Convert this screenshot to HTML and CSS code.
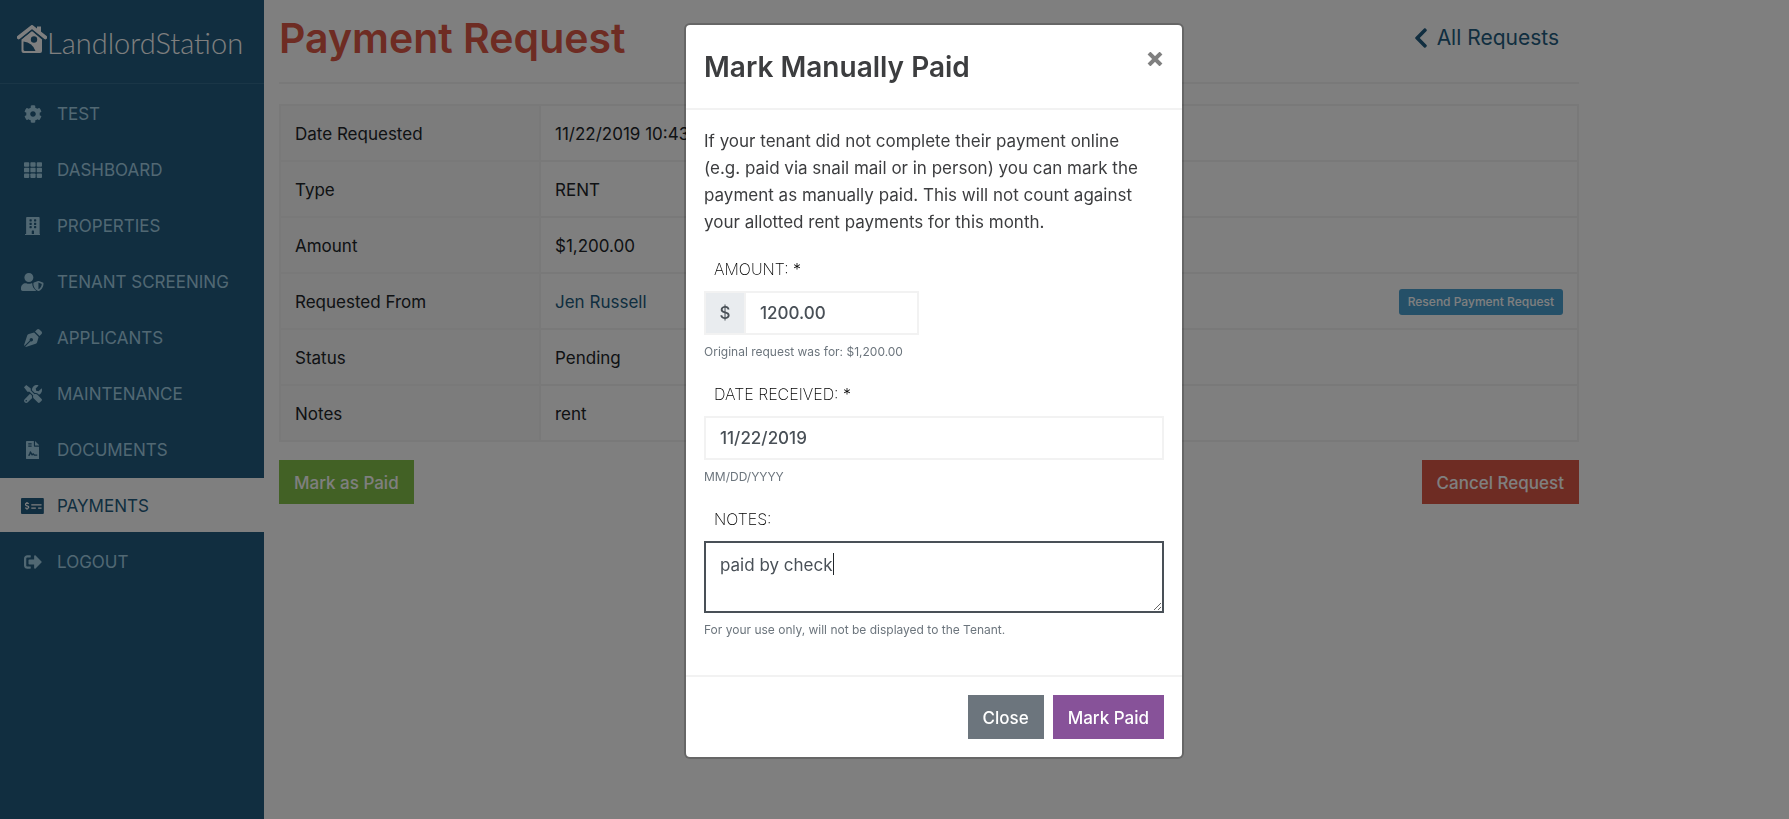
FILE: index.html
```html
<!DOCTYPE html>
<html lang="en">
<head>
<meta charset="utf-8">
<title>Payment Request - LandlordStation</title>
<link rel="stylesheet" href="styles.css">
</head>
<body>
<div class="app">
  <aside class="sidebar">
    <a class="brand" href="#">
      <svg class="brand-mark" viewBox="0 0 30 28" aria-hidden="true">
        <path d="M1.500 12.500 15 1.800 28.500 12.500" fill="none" stroke="currentColor" stroke-width="3.600" stroke-linecap="round" stroke-linejoin="round"/>
        <path d="M20 1.500h4v6l-4-3z" fill="currentColor"/>
        <path d="M4.500 14.500 15 6l10 8.500V26q0 2-2 2H6.500q-2 0-2-2z" fill="currentColor"/>
        <path d="M4 14 15 5.300 26 14" fill="none" stroke="#225c80" stroke-width="1"/>
        <g fill="#225c80"><circle cx="17" cy="14.500" r="3.200"/><path d="M6.500 16.500q9 1 12 9.500h-10.500q-1.500 0-1.500-1.500z"/></g>
      </svg>
      <span class="brand-name">LandlordStation</span>
    </a>
    <nav class="nav">
      <a class="nav-link" href="#"><span class="nav-icon"><svg viewBox="0 0 512 512"><path d="M487.400 315.700l-42.600-24.600c4.300-23.200 4.300-47 0-70.200l42.600-24.600c4.900-2.800 7.100-8.600 5.500-14-11.100-35.600-30-67.800-54.700-94.600-3.800-4.100-10-5.100-14.800-2.300L380.800 110c-17.900-15.400-38.500-27.300-60.800-35.100V25.800c0-5.600-3.900-10.500-9.400-11.700-36.700-8.200-74.300-7.800-109.200 0-5.500 1.200-9.400 6.100-9.400 11.700V75c-22.200 7.900-42.800 19.800-60.800 35.100L88.700 85.500c-4.900-2.800-11-1.900-14.800 2.300-24.700 26.700-43.600 58.900-54.700 94.600-1.700 5.400.6 11.200 5.500 14L67.300 221c-4.300 23.200-4.300 47 0 70.200l-42.600 24.600c-4.900 2.800-7.100 8.600-5.500 14 11.100 35.600 30 67.800 54.700 94.600 3.800 4.100 10 5.100 14.800 2.300l42.600-24.600c17.900 15.400 38.500 27.300 60.800 35.100v49.200c0 5.600 3.900 10.500 9.400 11.700 36.700 8.200 74.300 7.800 109.200 0 5.500-1.200 9.400-6.100 9.400-11.700v-49.200c22.200-7.900 42.800-19.800 60.800-35.100l42.600 24.600c4.900 2.800 11 1.900 14.800-2.300 24.700-26.700 43.600-58.900 54.700-94.600 1.500-5.500-.7-11.300-5.600-14.100zM256 336c-44.100 0-80-35.900-80-80s35.900-80 80-80 80 35.900 80 80-35.900 80-80 80z"/></svg></span>TEST</a>
      <a class="nav-link" href="#"><span class="nav-icon"><svg viewBox="0 0 512 512"><g><rect y="32" width="149" height="128" rx="24"/><rect x="181" y="32" width="149" height="128" rx="24"/><rect x="363" y="32" width="149" height="128" rx="24"/><rect y="192" width="149" height="128" rx="24"/><rect x="181" y="192" width="149" height="128" rx="24"/><rect x="363" y="192" width="149" height="128" rx="24"/><rect y="352" width="149" height="128" rx="24"/><rect x="181" y="352" width="149" height="128" rx="24"/><rect x="363" y="352" width="149" height="128" rx="24"/></g></svg></span>DASHBOARD</a>
      <a class="nav-link" href="#"><span class="nav-icon"><svg viewBox="0 0 448 512"><path fill-rule="evenodd" d="M32 24Q32 0 56 0H392Q416 0 416 24V480H436Q448 480 448 492V512H0V492Q0 480 12 480H32zM128 76v40q0 12 12 12h40q12 0 12-12V76q0-12-12-12h-40q-12 0-12 12zM256 76v40q0 12 12 12h40q12 0 12-12V76q0-12-12-12h-40q-12 0-12 12zM128 172v40q0 12 12 12h40q12 0 12-12v-40q0-12-12-12h-40q-12 0-12 12zM256 172v40q0 12 12 12h40q12 0 12-12v-40q0-12-12-12h-40q-12 0-12 12zM128 268v40q0 12 12 12h40q12 0 12-12v-40q0-12-12-12h-40q-12 0-12 12zM256 268v40q0 12 12 12h40q12 0 12-12v-40q0-12-12-12h-40q-12 0-12 12zM192 396v84h64v-84q0-12-12-12h-40q-12 0-12 12z"/></svg></span>PROPERTIES</a>
      <a class="nav-link" href="#"><span class="nav-icon"><svg viewBox="0 0 640 512"><path d="M224 256c70.700 0 128-57.300 128-128S294.700 0 224 0 96 57.300 96 128s57.300 128 128 128zM320 296q0-2 1-6c-8-1-16-2-24-2h-1c-22 10-46 16-72 16s-50-6-73-16h-17C60 288 0 348 0 422v42c0 26 21 48 48 48h352q20 0 34-14C370 456 320 390 320 296z"/><path d="M622.300 271.100l-115.200-45c-4.100-1.600-12.600-3.700-22.200 0l-115.200 45c-10.700 4.200-17.700 14-17.700 24.900 0 111.600 68.700 188.800 132.900 213.900 9.600 3.700 18 1.600 22.200 0C558.400 489.900 640 420.500 640 296c0-10.900-7-20.700-17.700-24.900zM496 462.400V273.300l95.500 37.300c-5.600 87.100-60.900 135.400-95.500 151.800z"/></svg></span>TENANT SCREENING</a>
      <a class="nav-link" href="#"><span class="nav-icon"><svg viewBox="0 0 512 512"><path d="M136.600 138.790a64.003 64.003 0 0 0-43.310 41.350L0 460l14.690 14.690L164.800 324.580c-2.990-6.260-4.800-13.180-4.800-20.580 0-26.510 21.490-48 48-48s48 21.490 48 48-21.490 48-48 48c-7.400 0-14.320-1.810-20.580-4.800L37.310 497.310 52 512l279.860-93.290a64.003 64.003 0 0 0 41.350-43.310L416 224 288 96l-151.400 42.790zm361.340-64.620l-60.110-60.110c-18.750-18.750-49.160-18.750-67.910 0l-56.550 56.550 128.020 128.020 56.550-56.550c18.750-18.750 18.750-49.150 0-67.910z"/></svg></span>APPLICANTS</a>
      <a class="nav-link" href="#"><span class="nav-icon"><svg viewBox="0 0 512 512"><path d="M501.100 395.700L384 278.600c-23.100-23.100-57.600-27.600-85.400-13.900L192 158.100V96L64 0 0 64l96 128h62.100l106.600 106.600c-13.600 27.800-9.200 62.300 13.900 85.400l117.100 117.100c14.600 14.600 38.200 14.600 52.700 0l52.700-52.700c14.500-14.600 14.500-38.200 0-52.700zM331.700 225c28.300 0 54.900 11 74.900 31l19.400 19.400c15.800-6.900 30.800-16.500 43.800-29.500 37.100-37.100 49.700-89.300 37.900-136.700-2.200-9-13.500-12.100-20.100-5.500l-74.400 74.400-67.900-11.300L334 98.900l74.400-74.400c6.600-6.600 3.400-17.900-5.700-20.200-47.400-11.700-99.600.9-136.600 37.900-28.500 28.500-41.900 66.100-41.200 103.600l82.100 82.100c8.100-1.900 16.500-2.900 24.700-2.900zm-103.900 82l-56.700-56.700L18.700 402.800c-25 25-25 65.500 0 90.500s65.500 25 90.500 0l123.600-123.600c-7.600-19.900-9.900-41.600-5-62.700zM64 472c-13.200 0-24-10.800-24-24 0-13.300 10.700-24 24-24s24 10.700 24 24c0 13.200-10.700 24-24 24z"/></svg></span>MAINTENANCE</a>
      <a class="nav-link" href="#"><span class="nav-icon"><svg viewBox="0 0 384 512"><path fill-rule="evenodd" d="M24 0H224V136q0 24 24 24H384V488q0 24-24 24H24Q0 512 0 488V24Q0 0 24 0zM64 64v32h96V64zM64 128v32h96v-32zM64 416h44l24-52 30 48h22l20-24 24 28h92v-32h-72l-44-40-26 20-38-68q-16-16-30 4L84 384H64zM256 0l128 128H256z"/></svg></span>DOCUMENTS</a>
      <a class="nav-link nav-link-active" href="#" aria-current="page"><span class="nav-icon"><svg viewBox="0 0 640 448"><rect width="640" height="448" rx="28"/><g class="nav-icon-lines" fill="none" stroke-width="34"><path d="M288 190h288M288 286h128M480 286h96"/><path d="M214 166q-14-22-46-20-42 2-42 34 0 30 44 40 48 10 48 40-2 32-48 32-34 0-50-24M168 112v34M168 292v40"/></g></svg></span>PAYMENTS</a>
      <a class="nav-link" href="#"><span class="nav-icon"><svg viewBox="0 0 512 512"><path d="M497 273L329 441c-15 15-41 4.500-41-17v-96H152c-13.300 0-24-10.700-24-24v-96c0-13.300 10.700-24 24-24h136V88c0-21.400 25.900-32 41-17l168 168c9.300 9.400 9.300 24.600 0 34zM192 436v-40c0-6.600-5.400-12-12-12H96c-17.700 0-32-14.300-32-32V160c0-17.700 14.300-32 32-32h84c6.600 0 12-5.400 12-12V76c0-6.600-5.400-12-12-12H96c-53 0-96 43-96 96v192c0 53 43 96 96 96h84c6.600 0 12-5.400 12-12z"/></svg></span>LOGOUT</a>
    </nav>
  </aside>

  <main class="main">
    <header class="page-header">
      <h1 class="page-title">Payment Request</h1>
      <a class="back-link" href="#"><svg class="back-icon" viewBox="25 32 270 448" aria-hidden="true"><path d="M34.520 239.030L228.870 44.690c9.370-9.370 24.570-9.370 33.940 0l22.670 22.670c9.360 9.360 9.370 24.520.04 33.900L131.490 256l154.020 154.750c9.340 9.380 9.320 24.540-.04 33.900l-22.670 22.670c-9.370 9.370-24.570 9.370-33.940 0L34.520 272.970c-9.370-9.370-9.370-24.570 0-33.940z"/></svg>All Requests</a>
    </header>
    <table class="details">
      <tbody>
        <tr><th scope="row">Date Requested</th><td>11/22/2019 10:43</td></tr>
        <tr><th scope="row">Type</th><td>RENT</td></tr>
        <tr><th scope="row">Amount</th><td>$1,200.00</td></tr>
        <tr><th scope="row">Requested From</th><td><div class="cell-split"><a class="tenant-link" href="#">Jen Russell</a><button class="btn-small" type="button">Resend Payment Request</button></div></td></tr>
        <tr><th scope="row">Status</th><td>Pending</td></tr>
        <tr><th scope="row">Notes</th><td>rent</td></tr>
      </tbody>
    </table>
    <div class="page-actions">
      <button class="btn btn-green" type="button">Mark as Paid</button>
      <button class="btn btn-red" type="button">Cancel Request</button>
    </div>
  </main>
</div>

<div class="backdrop">
  <form class="modal" role="dialog" aria-modal="true" aria-labelledby="modal-title">
    <header class="modal-header">
      <h2 class="modal-title" id="modal-title">Mark Manually Paid</h2>
      <button class="modal-close" type="button" aria-label="Close dialog"><svg viewBox="0 0 14 14" aria-hidden="true"><path d="M1 1l12 12M13 1L1 13" fill="none" stroke="currentColor" stroke-width="4"/></svg></button>
    </header>
    <div class="modal-body">
      <p class="intro">If your tenant did not complete their payment online (e.g. paid via snail mail or in person) you can mark the payment as manually paid. This will not count against your allotted rent payments for this month.</p>
      <div class="field">
        <label class="label" for="amount">AMOUNT: <span class="required">*</span></label>
        <div class="input-group">
          <span class="prefix">$</span>
          <input class="input" id="amount" type="text" value="1200.00">
        </div>
        <small class="hint">Original request was for: $1,200.00</small>
      </div>
      <div class="field">
        <label class="label" for="received">DATE RECEIVED: <span class="required">*</span></label>
        <input class="input" id="received" type="text" value="11/22/2019">
        <small class="hint">MM/DD/YYYY</small>
      </div>
      <div class="field">
        <label class="label" for="notes">NOTES:</label>
        <div class="textarea-wrap">
          <textarea class="input textarea" id="notes">paid by check</textarea>
          <span class="caret"></span>
        </div>
        <small class="hint">For your use only, will not be displayed to the Tenant.</small>
      </div>
    </div>
    <footer class="modal-footer">
      <button class="btn btn-gray" type="button">Close</button>
      <button class="btn btn-purple" type="submit">Mark Paid</button>
    </footer>
  </form>
</div>
</body>
</html>
```
FILE: styles.css
```css
*, *::before, *::after { box-sizing: border-box; }

body {
  margin: 0;
  font-family: Inter, "Liberation Sans", sans-serif;
  font-size: 17px;
  line-height: 27px;
  color: #212529;
  background: #fff;
}

a { text-decoration: none; }
button, input, textarea { font: inherit; }
svg { display: block; fill: currentColor; }

.app { display: flex; min-height: 100vh; }

/* Sidebar */
.sidebar { flex: 0 0 264px; background: #225c80; }
.brand {
  display: flex;
  align-items: flex-start;
  height: 84px;
  padding: 25px 17px 0;
  border-bottom: 1px solid #346c8e;
  color: #fff;
}
.brand-mark { width: 30px; height: 28px; flex: none; }
.brand-name {
  font-family: Lato, sans-serif;
  font-weight: 300;
  font-size: 29px;
  line-height: 36px;
}
.nav { display: flex; flex-direction: column; gap: 2px; padding-top: 2px; }
.nav-link {
  display: flex;
  align-items: center;
  height: 54px;
  padding: 2px 0 0 21px;
  color: #a3d0e6;
}
.nav-link-active { background: #fff; color: #225c80; }
.nav-icon { display: flex; justify-content: center; width: 23px; margin-right: 13px; }
.nav-icon svg { height: 18px; }
.nav-link-active svg { height: 16px; }
.nav-icon-lines { stroke: #fff; }

/* Page */
.main { flex: 1; max-width: 1330px; padding: 0 15px; }
.page-header {
  display: flex;
  justify-content: space-between;
  align-items: flex-start;
  height: 84px;
  padding-top: 10px;
  border-bottom: 2px solid #f2f2f2;
}
.page-title { margin: 0; font-size: 41px; line-height: 56px; font-weight: 600; color: #dc5846; }
.back-link {
  display: flex;
  align-items: center;
  gap: 10px;
  padding-right: 20px;
  font-size: 21px;
  line-height: 56px;
  color: #225c80;
}
.back-icon { width: 12px; height: 20px; }

.details {
  width: 100%;
  margin: 20px 0 18px;
  border-collapse: collapse;
}
.details th, .details td {
  height: 56px;
  padding: 2px 14px 0;
  border: 2px solid #f2f2f2;
  text-align: left;
  font-weight: 400;
}
.details th { width: 260px; background: #f8f8f8; }
.cell-split { display: flex; justify-content: space-between; align-items: center; }
.tenant-link { color: #225c80; }
.btn-small {
  height: 26px;
  padding: 0 9px;
  border: 0;
  border-radius: 3px;
  background: #4ba1d1;
  color: #fff;
  font-size: 12px;
  font-weight: 500;
  line-height: 26px;
}
.page-actions { display: flex; justify-content: space-between; }

.btn {
  height: 44px;
  padding: 2px 15px 0;
  border: 0;
  color: #fff;
  font-weight: 500;
}
.btn-green { background: #84c24b; }
.btn-red { background: #dc5846; }
.btn-gray { background: #6c757d; }
.btn-purple { background: #875299; }

/* Dialog */
.backdrop {
  position: fixed;
  inset: 0;
  display: flex;
  justify-content: center;
  align-items: flex-start;
  padding: 23px 0 23px 79px;
  overflow: auto;
  background: rgba(0, 0, 0, .5);
}
.modal {
  flex: 0 1 500px;
  border: 2px solid rgba(0, 0, 0, .2);
  border-radius: 6px;
  background: #fff;
  background-clip: padding-box;
  color: #3c3d3f;
}
.modal-header {
  display: flex;
  justify-content: space-between;
  align-items: flex-start;
  padding: 24px 18px 23px;
  border-bottom: 2px solid #f2f2f2;
}
.modal-title { margin: 0; font-size: 28px; line-height: 36px; font-weight: 600; }
.modal-close {
  margin-top: 3px;
  padding: 0;
  border: 0;
  background: none;
  color: #808080;
}
.modal-close svg { width: 18px; height: 14px; }
.modal-body { padding: 18px; }
.intro { margin: 0 0 20px; padding-right: 9px; }
.field { display: flex; flex-direction: column; margin-bottom: 18px; }
.field:last-child { margin-bottom: 16px; }
.label { padding-left: 10px; margin-bottom: 8px; font-size: 16px; font-weight: 200; color: #000; }
.required { font-weight: 300; }
.input {
  display: block;
  width: 100%;
  height: 44px;
  margin: 0;
  padding: 0 14px;
  border: 2px solid #f2f2f2;
  border-radius: 0;
  outline: 0;
  background: #fff;
  color: #495057;
  font-weight: 500;
}
.input-group { display: flex; width: 215px; }
.prefix {
  flex: none;
  width: 40px;
  border: 2px solid #f2f2f2;
  border-right: 0;
  background: #e9ecef;
  color: #495057;
  font-weight: 500;
  line-height: 40px;
  text-align: center;
}
.textarea-wrap { position: relative; }
.textarea {
  height: 72px;
  padding: 9px 14px;
  border-color: #495057;
  resize: vertical;
  font-weight: 400;
}
.caret {
  position: absolute;
  top: 12px;
  left: 129px;
  width: 1px;
  height: 22px;
  background: #212529;
}
.hint { margin-top: 6px; font-size: 12px; line-height: 22px; color: #6c757d; }
.modal-footer {
  display: flex;
  justify-content: flex-end;
  gap: 9px;
  padding: 18px;
  border-top: 2px solid #f2f2f2;
}
```
